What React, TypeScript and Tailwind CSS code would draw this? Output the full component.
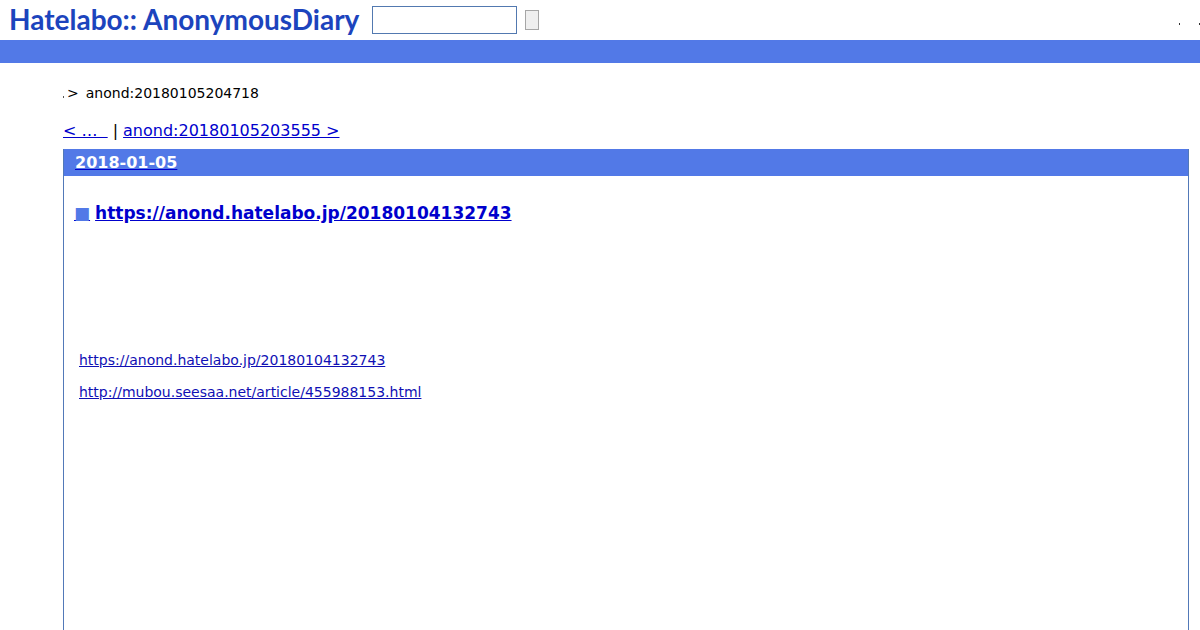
const entryUrl = "https://anond.hatelabo.jp/20180104132743";
const articleUrl = "http://mubou.seesaa.net/article/455988153.html";

function Header() {
  return (
    <header>
      <div className="flex h-10 items-center pl-[9px]">
        <a
          href="/"
          className="flex w-[363px] gap-1.5 pb-0.5 font-[Lato,sans-serif] text-[28px] leading-9 font-bold whitespace-nowrap text-[#1c44bd]"
        >
          <span>Hatelabo::</span>
          <span>AnonymousDiary</span>
        </a>
        <form className="flex items-center gap-2" onSubmit={(e) => e.preventDefault()}>
          <input
            type="text"
            aria-label="Search"
            className="h-7 w-[145px] border border-[#5279b0] bg-white px-1 text-sm outline-none"
          />
          <button
            type="submit"
            aria-label="Submit search"
            className="h-5 w-3.5 border border-[#a6a6a6] bg-[#efefef]"
          />
        </form>
        <nav aria-label="Account" className="ml-auto flex gap-[19px] pt-2">
          <a href="/guide" aria-label="Guide" className="h-0.5 w-px bg-[#333333]" />
          <a href="/login" aria-label="Login" className="h-0.5 w-px bg-[#333333]" />
        </nav>
      </div>
      <div className="h-[23px] bg-[#5279e7]" />
    </header>
  );
}

function Breadcrumb() {
  return (
    <nav aria-label="Breadcrumb" className="flex items-center text-sm leading-5">
      <a href="/" aria-label="Home" className="mt-2 mr-[3px] h-0.5 w-px bg-[#555555]" />
      <span className="mr-[7px]">&gt;</span>
      <span>anond:20180105204718</span>
    </nav>
  );
}

export default function App() {
  return (
    <div className="flex min-h-screen flex-col bg-white font-['DejaVu_Sans',sans-serif] text-black">
      <Header />
      <main className="mr-[11px] ml-[63px] flex flex-1 flex-col pt-5">
        <Breadcrumb />
        <nav
          aria-label="Neighbouring entries"
          className="mt-4 flex gap-[5px] leading-6 whitespace-pre text-[#0000cc]"
        >
          <a href="#previous" className="underline">{"< …\u00a0\u00a0"}</a>
          <span className="text-black">|</span>
          <a href="#next" className="underline">anond:20180105203555 &gt;</a>
        </nav>
        <article className="mt-1.5 flex-1 border-x border-[#5279b8]">
          <h2 className="h-[27px] bg-[#5279e7] pl-[11px] leading-[27px] font-bold">
            <a href="/20180105" className="text-white underline decoration-[#0000cc]">2018-01-05</a>
          </h2>
          <div className="pt-[25px] pl-2.5">
            <h3 className="flex gap-[5px] text-[17px] leading-6 font-bold text-[#0000cc]">
              <a href="#entry" className="text-[#5279e7] underline decoration-[#0000cc]">■</a>
              <a href={entryUrl} className="underline">{entryUrl}</a>
            </h3>
            <div className="mt-[125px] flex flex-col items-start gap-3 pl-[5px] text-sm leading-5 text-[#1010b4]">
              <a href={entryUrl} className="underline">{entryUrl}</a>
              <a href={articleUrl} className="underline">{articleUrl}</a>
            </div>
          </div>
        </article>
      </main>
    </div>
  );
}
